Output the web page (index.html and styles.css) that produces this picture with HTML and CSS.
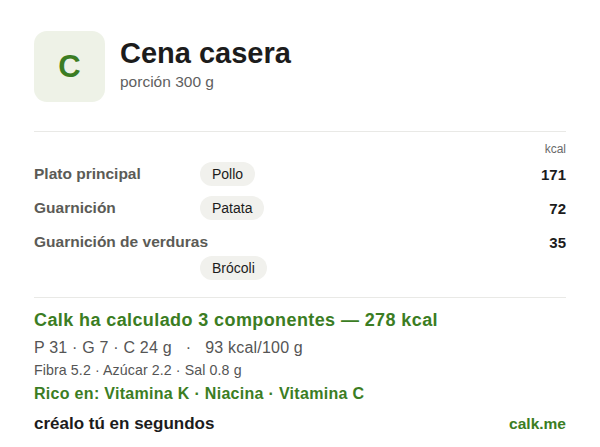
FILE: index.html
```html
<!DOCTYPE html>
<html lang="es">
<head>
<meta charset="utf-8">
<link rel="stylesheet" href="styles.css">
</head>
<body>
<main class="card">
  <header class="head">
    <div class="logo">C</div>
    <div class="titles">
      <h1 class="title">Cena casera</h1>
      <div class="sub">porción 300 g</div>
    </div>
  </header>
  <hr class="rule rule-top">
  <section class="table">
    <div class="unit">kcal</div>
    <div class="label">Plato principal</div>
    <div class="pillcell"><span class="pill">Pollo</span></div>
    <div class="kcal">171</div>
    <div class="label">Guarnición</div>
    <div class="pillcell"><span class="pill">Patata</span></div>
    <div class="kcal">72</div>
    <div class="label wide">Guarnición de verduras</div>
    <div class="kcal">35</div>
    <div class="pillcell second"><span class="pill">Brócoli</span></div>
  </section>
  <hr class="rule rule-bottom">
  <section class="summary">
    <div class="total">Calk ha calculado 3 componentes — 278 kcal</div>
    <div class="macros">P 31 · G 7 · C 24 g &nbsp; · &nbsp; 93 kcal/100 g</div>
    <div class="minor">Fibra 5.2 · Azúcar 2.2 · Sal 0.8 g</div>
    <div class="rich">Rico en: Vitamina K · Niacina · Vitamina C</div>
    <div class="foot">
      <span class="cta">créalo tú en segundos</span>
      <span class="brand">calk.me</span>
    </div>
  </section>
</main>
</body>
</html>
```
FILE: styles.css
```css
* { box-sizing: border-box; }
html, body { margin: 0; padding: 0; background: #ffffff; }
body {
  font-family: "Liberation Sans", Arial, sans-serif;
  color: #1c1c1c;
  width: 600px;
  height: 447px;
  overflow: hidden;
}
.card { padding: 31px 34px 0 34px; }
.head { display: flex; align-items: center; gap: 15px; }
.logo {
  width: 71px; height: 71px;
  border-radius: 13px;
  background: #eef2e7;
  color: #3b7d23;
  font-weight: 700;
  font-size: 31px;
  display: flex; align-items: center; justify-content: center;
}
.titles { display: flex; flex-direction: column; padding-bottom: 6px; }
.title { margin: 0; font-size: 29px; line-height: 32px; font-weight: 700; color: #1c1c1c; }
.sub { font-size: 15.5px; line-height: 18px; color: #5f5f5f; margin-top: 4px; }
.rule { border: 0; height: 1px; background: #e9e9e6; margin: 0; }
.rule-top { margin-top: 29px; }
.table {
  display: grid;
  grid-template-columns: 166px 1fr auto;
  align-items: center;
  row-gap: 10px;
  padding-top: 10px;
}
.unit { grid-column: 1 / 4; text-align: right; font-size: 12px; line-height: 14px; color: #6a6a6a; margin-bottom: -4px; }
.label { font-size: 15.5px; font-weight: 700; color: #5b5b56; line-height: 24px; }
.label.wide { grid-column: 1 / 3; }
.pillcell { grid-column: 2; }
.pillcell.second { margin-top: -8px; }
.pill {
  display: inline-block;
  background: #f1f1ed;
  border-radius: 12px;
  padding: 0 12px;
  font-size: 14px;
  line-height: 24px;
  color: #1c1c1c;
}
.kcal { grid-column: 3; text-align: right; font-size: 15px; font-weight: 700; color: #1c1c1c; }
.rule-bottom { margin-top: 17px; }
.summary { padding-top: 12px; }
.total { color: #3b7d23; font-weight: 700; font-size: 18px; letter-spacing: 0.4px; line-height: 20px; }
.macros { font-size: 16px; letter-spacing: 0.2px; line-height: 18px; color: #555; margin-top: 9px; }
.minor { font-size: 14.2px; letter-spacing: 0.1px; line-height: 16px; color: #555; margin-top: 5px; }
.rich { color: #3b7d23; font-weight: 700; font-size: 16px; letter-spacing: 0.3px; line-height: 18px; margin-top: 7px; }
.foot { display: flex; justify-content: space-between; align-items: baseline; margin-top: 11px; }
.cta { font-size: 17px; font-weight: 700; color: #1c1c1c; }
.brand { font-size: 15.5px; font-weight: 700; color: #3b7d23; }
```
